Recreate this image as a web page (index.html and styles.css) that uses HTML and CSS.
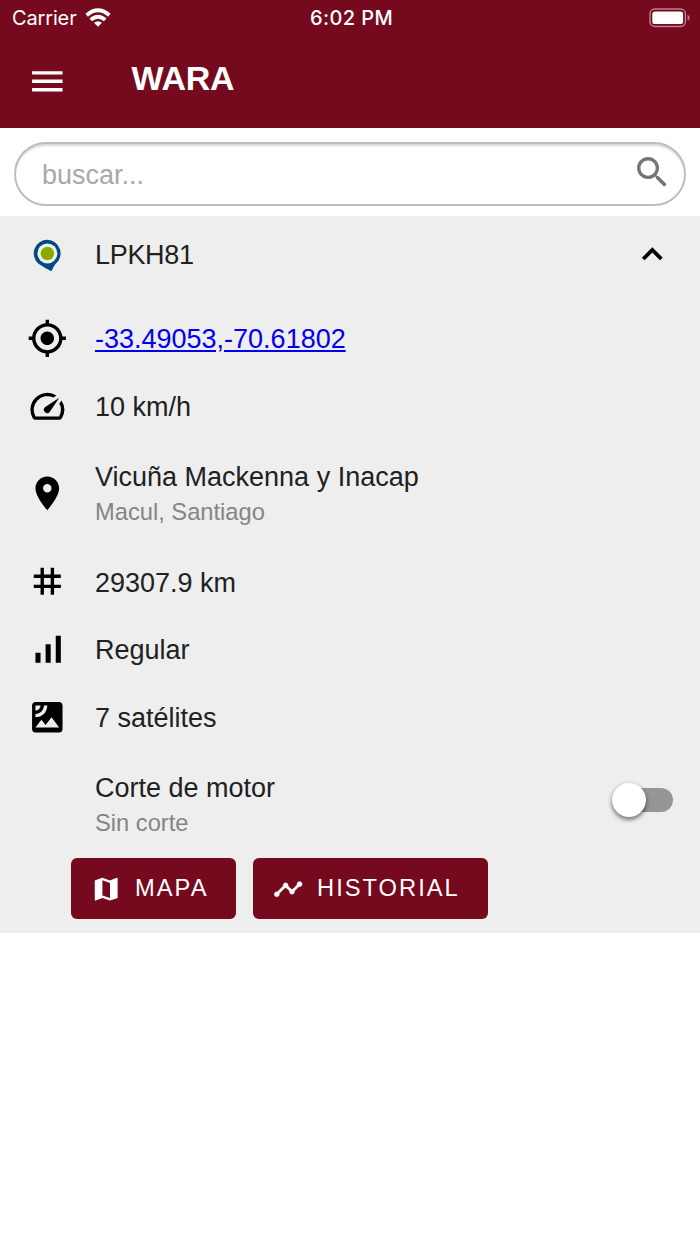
FILE: index.html
```html
<!DOCTYPE html>
<html lang="es">
<head>
<meta charset="utf-8">
<title>WARA</title>
<link rel="stylesheet" href="styles.css">
</head>
<body>
<header class="header">
  <div class="status">
    <div class="carrier"><span>Carrier</span>
      <svg class="wifi" viewBox="0 0 26 19"><g fill="none" stroke="#fff" stroke-width="3.8"><path d="M1.700 7.200Q13-2.600 24.300 7.200"/><path d="M5.800 11.900Q13 5.500 20.200 11.900"/></g><path fill="#fff" d="M13 18.800L9 14.800Q13 11.600 17 14.800z"/></svg>
    </div>
    <div class="clock">6:02 PM</div>
    <svg class="battery" viewBox="0 0 42 20"><rect x="1" y="1" width="35.4" height="17.5" rx="4.8" fill="none" stroke="#b9828e" stroke-width="1.4"/><rect x="3.3" y="3.4" width="30.8" height="12.7" rx="2.6" fill="#fff"/><path d="M38.6 6.8q2 1 2 3t-2 3z" fill="#b9828e"/></svg>
  </div>
  <div class="bar">
    <svg class="icon" viewBox="0 0 24 24"><path d="M3 18h18v-2H3v2zm0-5h18v-2H3v2zm0-7v2h18V6H3z"/></svg>
    <h1 class="brand">WARA</h1>
  </div>
</header>
<div class="search-wrap">
  <div class="search"><span>buscar...</span>
    <svg class="icon" viewBox="0 0 24 24"><path d="M15.5 14h-.79l-.28-.27C15.41 12.59 16 11.11 16 9.5 16 5.91 13.09 3 9.5 3S3 5.91 3 9.5 5.91 16 9.5 16c1.61 0 3.09-.59 4.23-1.57l.27.28v.79l5 4.99L20.49 19l-4.99-5zm-6 0C7.01 14 5 11.99 5 9.5S7.01 5 9.5 5 14 7.01 14 9.5 11.99 14 9.5 14z"/></svg>
  </div>
</div>
<main class="panel">
  <div class="row head">
    <svg class="icon" viewBox="0 0 40.6 40.6"><path fill="#004a80" d="M20.400 5.800a13.600 13.600 0 0 0-8.800 24q5.400 4 12.900 7.400 2-4.700 4-7.200A13.600 13.600 0 0 0 20.400 5.800z"/><circle cx="20.400" cy="19.400" r="10" fill="#f1f1ec"/><circle cx="20.400" cy="19.400" r="6.700" fill="#88ab00"/></svg>
    <div class="text plate">LPKH81</div>
    <svg class="icon" viewBox="0 0 24 24"><path d="M12 8l-6 6 1.41 1.41L12 10.83l4.59 4.58L18 14z" stroke="#000" stroke-width=".3"/></svg>
  </div>
  <div class="row">
    <svg class="icon" viewBox="0 0 24 24"><path d="M12 8c-2.21 0-4 1.79-4 4s1.79 4 4 4 4-1.79 4-4-1.79-4-4-4zm8.94 3c-.46-4.17-3.77-7.48-7.94-7.94V1h-2v2.06C6.83 3.52 3.52 6.83 3.06 11H1v2h2.06c.46 4.17 3.77 7.48 7.94 7.94V23h2v-2.06c4.17-.46 7.48-3.77 7.94-7.94H23v-2h-2.06zM12 19c-3.87 0-7-3.13-7-7s3.13-7 7-7 7 3.13 7 7-3.13 7-7 7z"/></svg>
    <div class="text"><a class="coords" href="#">-33.49053,-70.61802</a></div>
  </div>
  <div class="row">
    <svg class="icon" viewBox="0 0 24 24"><path d="M20.38 8.57l-1.23 1.85a8 8 0 0 1-.22 7.58H5.07A8 8 0 0 1 15.58 6.85l1.85-1.23A10 10 0 0 0 3.35 19a2 2 0 0 0 1.72 1h13.85a2 2 0 0 0 1.74-1 10 10 0 0 0-.27-10.44zm-9.79 6.84a2 2 0 0 0 2.83 0l5.66-8.49-8.49 5.66a2 2 0 0 0 0 2.83z"/></svg>
    <div class="text">10 km/h</div>
  </div>
  <div class="row tall">
    <svg class="icon" viewBox="0 0 24 24"><path d="M12 2C8.13 2 5 5.13 5 9c0 5.25 7 13 7 13s7-7.75 7-13c0-3.87-3.13-7-7-7zm0 9.500c-1.380 0-2.500-1.120-2.500-2.500s1.120-2.500 2.500-2.500 2.500 1.120 2.500 2.500-1.120 2.500-2.500 2.500z"/></svg>
    <div class="text">Vicuña Mackenna y Inacap<div class="sub">Macul, Santiago</div></div>
  </div>
  <div class="row">
    <svg class="icon" viewBox="0 0 24 24"><path d="M20 10V8h-4V4h-2v4h-4V4H8v4H4v2h4v4H4v2h4v4h2v-4h4v4h2v-4h4v-2h-4v-4h4zm-6 4h-4v-4h4v4z"/></svg>
    <div class="text">29307.9 km</div>
  </div>
  <div class="row">
    <svg class="icon" viewBox="0 0 24 24"><path d="M17 4h3v16h-3zM5 14h3v6H5zm6-5h3v11h-3z"/></svg>
    <div class="text">Regular</div>
  </div>
  <div class="row">
    <svg class="icon" viewBox="0 0 24 24"><path d="M19 3H5c-1.100 0-2 .9-2 2v14c0 1.100.9 2 2 2h14c1.100 0 2-.9 2-2V5c0-1.100-.9-2-2-2zM5 4.990h3C8 6.650 6.660 8 5 8V4.990zM5 12v-2c2.760 0 5-2.250 5-5.010h2C12 8.860 8.870 12 5 12zm0 6l3.500-4.500 2.500 3.010L14.500 12l4.500 6H5z"/></svg>
    <div class="text">7 satélites</div>
  </div>
  <div class="row tall engine">
    <div class="text">Corte de motor<div class="sub">Sin corte</div></div>
    <div class="switch"><div class="thumb"></div></div>
  </div>
  <div class="actions">
    <div class="button"><svg class="small" viewBox="0 0 24 24"><path d="M20.500 3l-.16.030L15 5.100 9 3 3.360 4.900c-.21.070-.36.250-.36.480V20.500c0 .28.220.5.500.5l.16-.030L9 18.900l6 2.100 5.640-1.900c.21-.070.36-.250.36-.480V3.500c0-.28-.220-.5-.500-.5zM15 19l-6-2.110V5l6 2.110V19z"/></svg>MAPA</div>
    <div class="button history"><svg class="small" viewBox="0 0 24 24"><path d="M23 8c0 1.100-.9 2-2 2-.18 0-.35-.020-.51-.070l-3.560 3.550c.050.160.070.340.070.520 0 1.100-.9 2-2 2s-2-.9-2-2c0-.18.020-.36.070-.52l-2.550-2.550c-.16.050-.34.070-.52.070s-.36-.020-.52-.070l-4.550 4.560c.050.160.070.330.070.510 0 1.100-.9 2-2 2s-2-.9-2-2 .9-2 2-2c.18 0 .35.020.51.070l4.560-4.550C8.020 9.360 8 9.180 8 9c0-1.100.9-2 2-2s2 .9 2 2c0 .18-.020.36-.070.52l2.550 2.550c.16-.050.34-.070.52-.070s.36.020.52.070l3.550-3.560C19.020 8.350 19 8.180 19 8c0-1.100.9-2 2-2s2 .9 2 2z" stroke="#fff" stroke-width=".3"/></svg>HISTORIAL</div>
  </div>
</main>
</body>
</html>
```
FILE: styles.css
```css
* { box-sizing: border-box; }
body { margin: 0; background: #fff; color: #212121; font-family: "Liberation Sans", Arial, sans-serif; font-size: 27px; }
svg { display: block; flex: none; fill: currentColor; }
.icon { width: 40.6px; height: 40.6px; color: #000; }
.header { height: 128.4px; background: #750a1f; color: #fff; }
.status { height: 36px; display: grid; grid-template-columns: 1fr auto 1fr; align-items: center; padding: 0 9px 0 12px; font-family: Inter, sans-serif; font-size: 20px; }
.carrier { display: flex; align-items: center; gap: 8px; letter-spacing: -.15px; }
.wifi { width: 26px; height: 19px; margin-top: -1px; }
.clock { font-weight: 500; letter-spacing: .4px; }
.battery { width: 42px; height: 20px; justify-self: end; margin-top: -1px; }
.bar { display: flex; align-items: center; height: 90px; padding-left: 27px; }
.bar .icon { color: #fff; }
.brand { margin: 0 0 7px 64px; font-size: 34px; line-height: 40px; letter-spacing: -.3px; }
.search-wrap { height: 88px; padding: 14px 14px 0; }
.search { height: 64px; border: 2px solid #bdbdbd; border-radius: 32px; padding: 0 11px 0 26px; display: flex; align-items: center; justify-content: space-between; color: #a9a9a9; box-shadow: inset 0 3px 2px -1px #d8d8d8; }
.search span { padding-top: 3px; }
.search .icon { color: #757575; margin-bottom: 4px; }
.panel { height: 717px; background: #eee; padding-right: 27px; }
.row { height: 67.7px; padding-left: 27px; display: flex; align-items: center; }
.row.head { height: 76px; margin-bottom: 12px; }
.text { flex: 1; margin-left: 27.4px; padding-top: 3px; line-height: 35px; }
.plate { letter-spacing: -.3px; padding-top: 2px; }
.coords { color: #00e; text-decoration: underline; }
.row.tall { height: 108px; }
.sub { font-size: 23.7px; color: #858585; }
.engine .text { margin-left: 68px; }
.switch { position: relative; width: 54px; height: 24px; border-radius: 12px; background: #969696; margin-top: -9px; }
.thumb { position: absolute; left: -7px; top: -5px; width: 34px; height: 34px; border-radius: 50%; background: #fff; box-shadow: 0 3px 4px rgba(0,0,0,.4), 0 1px 5px rgba(0,0,0,.2); }
.actions { display: flex; gap: 17px; padding-left: 71px; margin-top: -.5px; }
.button { width: 165px; height: 61px; border-radius: 6px; background: #750a1f; color: #fff; display: flex; align-items: center; gap: 13.7px; padding-left: 20px; font-size: 23.7px; letter-spacing: 2px; }
.history { width: 235px; }
.small { width: 30.4px; height: 30.4px; }
```
